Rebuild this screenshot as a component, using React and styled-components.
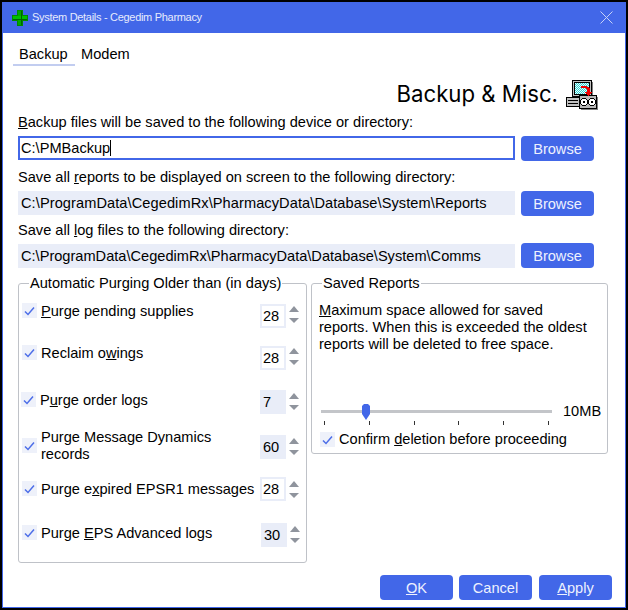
import React from "react";
import styled, { createGlobalStyle } from "styled-components";

const Global = createGlobalStyle`
  html, body { margin: 0; padding: 0; background: #fff; }
  body { font-family: "Liberation Sans", Arial, sans-serif; font-size: 14.6px; color: #000; }
  * { box-sizing: border-box; }
`;

const Frame = styled.div`
  width: 628px; height: 610px; border: 2px solid #000; background: #4267e8; padding: 0 1px 1px 1px;
  display: flex; flex-direction: column; overflow: hidden;
`;
const TitleBar = styled.div`
  height: 31px; flex: none; display: flex; align-items: center; padding: 0 12px 0 9px; background: #4267e8;
`;
const TitleText = styled.span`
  font-size: 11px; letter-spacing: -0.3px; font-family: "Liberation Sans", sans-serif; color: #e6ebfd; margin-left: 4px; flex: 1; padding-bottom: 1px;
`;
const Body = styled.div`
  flex: 1; background: #fff; padding: 12px 15px 0 15px; display: flex; flex-direction: column;
`;
const Tabs = styled.div`display: flex; height: 21px; margin-left: -5px;`;
const Tab = styled.div`
  padding: 0 6px; height: 21px; line-height: 19px; width: ${p => p.$w}px;
  border-bottom: 2px solid ${p => (p.$active ? "#c2cdf0" : "transparent")};
`;
const HeadRow = styled.div`
  display: flex; justify-content: flex-end; align-items: center; height: 38px; margin-top: 10px; padding-right: 12px; gap: 8px;
`;
const Heading = styled.div`
  font-family: "Inter", sans-serif; font-size: 22.2px; font-weight: 400; color: #000; padding-bottom: 4px;
`;
const FieldLabel = styled.div`
  line-height: 17px; height: 17px; margin-top: ${p => p.$top}px;
`;
const FieldRow = styled.div`
  display: flex; gap: 6px; align-items: flex-start; margin-top: ${p => p.$top}px; height: 25px;
`;
const PathInput = styled.div`
  width: 497px; height: 24px; line-height: ${p => (p.$focus ? 20 : 24)}px; white-space: nowrap;
  background: ${p => (p.$focus ? "#fff" : "#e9edf8")};
  border: ${p => (p.$focus ? "2px solid #4267e8" : "none")};
  padding-left: ${p => (p.$focus ? 1 : 3)}px; font-size: 14.6px; letter-spacing: ${p => p.$ls || 0}px;
`;
const Caret = styled.span`display: inline-block; width: 1px; height: 16px; background: #000; vertical-align: -3px;`;
const Btn = styled.div`
  width: ${p => p.$w || 73}px; height: 25px; background: #4267e8; border-radius: 4px; color: #eef1fe;
  display: flex; align-items: center; justify-content: center; font-size: 14.6px;
  margin-top: ${p => p.$top || 0}px; flex: none;
`;
const Groups = styled.div`display: flex; gap: 4px; align-items: flex-start; margin-top: 6px;`;
const Group = styled.fieldset`
  margin: 0; padding: 0; width: ${p => p.$w}px; height: ${p => p.$h}px; border: 1px solid #bfc2c8; border-radius: 3px; min-width: 0;
`;
const Legend = styled.legend`
  margin-left: 10px; padding: 0 1px; line-height: 17px; font-size: 14.6px;
`;
const PurgeList = styled.div`display: flex; flex-direction: column; padding: 12px 0 0 3px;`;
const PurgeRow = styled.div`
  display: grid; grid-template-columns: 15px 223px 26px 14px; align-items: start; height: ${p => p.$h}px;
`;
const CheckBox = styled.div`
  width: 15px; height: 15px; background: #eef1fa; display: flex; align-items: center; justify-content: center;
  margin-top: ${p => p.$top || 0}px; margin-left: ${p => p.$x || 0}px; flex: none;
`;
const RowLabel = styled.div`
  padding-left: 4px; line-height: 17px; margin-top: ${p => p.$top || 0}px; margin-left: ${p => p.$x || 0}px;
  white-space: ${p => (p.$wrap ? "normal" : "nowrap")};
`;
const SpinBox = styled.div`
  width: 26px; height: 24px; line-height: 20px; padding-left: 1px;
  margin-left: ${p => p.$x || 0}px;
  background: ${p => (p.$fill ? "#e9edf8" : "#fff")}; border: 2px solid #e9edf8;
`;
const Arrows = styled.div`
  display: flex; flex-direction: column; gap: 6px; padding: ${p => p.$top}px 0 0 3px;
  margin-left: ${p => p.$x || 0}px;
`;
const Tri = styled.div`
  width: 0; height: 0; border-left: 5px solid transparent; border-right: 5px solid transparent;
  ${p => (p.$down ? "border-top: 5px solid #8f949d;" : "border-bottom: 6px solid #8f949d;")}
`;
const Para = styled.div`
  padding: 10px 18px 0 7px; line-height: 17px; height: 109px;
`;
const SliderRow = styled.div`display: flex; align-items: center; padding-left: 9px; height: 20px;`;
const Track = styled.div`position: relative; width: 231px; height: 3px; background: #c3c5c9;`;
const Thumb = styled.svg`position: absolute; left: 41px; top: -6px;`;
const SliderValue = styled.div`margin-left: 11px;`;
const Ticks = styled.div`display: flex; justify-content: space-between; width: 225px; margin: 0 0 0 12px;`;
const TickMark = styled.div`width: 1px; height: 4px; background: #333;`;
const ConfirmRow = styled.div`display: flex; align-items: center; padding-left: 8px; margin-top: 6px;`;
const ConfirmLabel = styled.div`padding-left: 4px; line-height: 17px;`;
const Footer = styled.div`
  display: flex; justify-content: flex-end; margin: 12px -2px 0 0; gap: 6px;
`;
const CancelWrap = styled.div`margin-right: 1px;`;

const Tick = () => (
  <svg width="11" height="10" viewBox="0 0 11 10">
    <path d="M1 5.5 L4 8.5 L10 1.5" fill="none" stroke="#4d6ee8" strokeWidth="1.5" />
  </svg>
);

const Cross = () => (
  <svg width="16" height="16" viewBox="0 0 16 16" shapeRendering="crispEdges">
    <path d="M5 0h6v5h5v6h-5v5H5v-5H0V5h5z" fill="#008a00" />
    <rect x="6" y="1" width="3" height="14" fill="#00a800" />
    <rect x="1" y="6" width="14" height="3" fill="#00c000" />
    <rect x="9" y="1" width="1" height="14" fill="#006400" />
    <rect x="1" y="9" width="14" height="1" fill="#006400" />
  </svg>
);

const Close = () => (
  <svg width="13" height="13" viewBox="0 0 13 13">
    <path d="M0.5 0.5 L12.5 12.5 M12.5 0.5 L0.5 12.5" stroke="#c6d1f7" strokeWidth="1" fill="none" />
  </svg>
);

const BackupIcon = () => {
  const dots = [];
  for (let y = 3; y < 14; y++) for (let x = 9; x < 23; x++) if ((x + y) % 2 === 0) dots.push(<rect key={x + "-" + y} x={x} y={y} width="1" height="1" fill="#e8ffff" />);
  return (
    <svg width="32" height="30" viewBox="0 0 32 30" shapeRendering="crispEdges">
      <rect x="6" y="0" width="20" height="17" fill="#000" />
      <rect x="7" y="1" width="18" height="15" fill="#c0c0c0" />
      <rect x="8" y="2" width="16" height="13" fill="#000" />
      <rect x="9" y="3" width="14" height="11" fill="#30d0d0" />
      {dots}
      <rect x="26" y="2" width="1" height="15" fill="#808080" />
      <rect x="0" y="17" width="18" height="10" fill="#000" />
      <rect x="1" y="18" width="16" height="8" fill="#c0c0c0" />
      <rect x="2" y="20" width="10" height="1" fill="#000" />
      <rect x="2" y="23" width="10" height="1" fill="#000" />
      <rect x="13" y="15" width="18" height="14" fill="#000" />
      <rect x="14" y="16" width="16" height="12" fill="#b8b8b8" />
      <rect x="15" y="29" width="17" height="1" fill="#808080" />
      <rect x="31" y="17" width="1" height="13" fill="#808080" />
      <circle cx="18" cy="22" r="3.5" fill="#fff" stroke="#000" />
      <circle cx="26" cy="22" r="3.5" fill="#fff" stroke="#000" />
      <rect x="17" y="21" width="2" height="2" fill="#000" />
      <rect x="25" y="21" width="2" height="2" fill="#000" />
      <path d="M15 6h6v1h2v1h1v4h2v1h-1v1h-1v1h-1v1h-1v-1h-1v-1h-1v-1h-1v-1h2V9h-1V8h-5z" fill="#f00000" />
    </svg>
  );
};

const rows = [
  { h: 42, label: <><u>P</u>urge pending supplies</>, val: "28", ct: -1, lt: -1, at: 2 },
  { h: 44, label: <>Reclaim o<u>w</u>ings</>, val: "28", ct: -1, lt: -1, at: 2 },
  { h: 45, label: <>P<u>u</u>rge order logs</>, val: "7", fill: true, ct: 2, lt: 2, at: 3, cx: -1 },
  { h: 42, label: <>Purge Message Dynamics records</>, val: "60", fill: true, ct: 3, lt: -6, at: 3, wrap: true },
  { h: 46, label: <>Purge e<u>x</u>pired EPSR1 messages</>, val: "28", ct: 4, lt: 4, at: 4 },
  { h: 40, label: <>Purge <u>E</u>PS Advanced logs</>, val: "30", fill: true, ct: 2, lt: 2, at: 3, spinX: 1 },
];

export default function App() {
  return (
    <>
      <Global />
      <Frame>
        <TitleBar>
          <Cross />
          <TitleText>System Details - Cegedim Pharmacy</TitleText>
          <Close />
        </TitleBar>
        <Body>
          <Tabs>
            <Tab $active $w={62}>Backup</Tab>
            <Tab $w={62}>Modem</Tab>
          </Tabs>
          <HeadRow>
            <Heading>Backup &amp; Misc.</Heading>
            <BackupIcon />
          </HeadRow>
          <FieldLabel $top={0}><u>B</u>ackup files will be saved to the following device or directory:</FieldLabel>
          <FieldRow $top={5}>
            <PathInput $focus>C:\PMBackup<Caret /></PathInput>
            <Btn>Browse</Btn>
          </FieldRow>
          <FieldLabel $top={8}>Save all <u>r</u>eports to be displayed on screen to the following directory:</FieldLabel>
          <FieldRow $top={5}>
            <PathInput $ls={0.08}>C:\ProgramData\CegedimRx\PharmacyData\Database\System\Reports</PathInput>
            <Btn>Browse</Btn>
          </FieldRow>
          <FieldLabel $top={6}>Save all <u>l</u>og files to the following directory:</FieldLabel>
          <FieldRow $top={5}>
            <PathInput>C:\ProgramData\CegedimRx\PharmacyData\Database\System\Comms</PathInput>
            <Btn $top={-1}>Browse</Btn>
          </FieldRow>
          <Groups>
            <Group $w={289} $h={288}>
              <Legend>Automatic Purging Older than (in days)</Legend>
              <PurgeList>
                {rows.map((r, i) => (
                  <PurgeRow key={i} $h={r.h}>
                    <CheckBox $top={r.ct} $x={r.cx}><Tick /></CheckBox>
                    <RowLabel $top={r.lt} $x={r.cx} $wrap={r.wrap}>{r.label}</RowLabel>
                    <SpinBox $fill={r.fill} $x={r.spinX}>{r.val}</SpinBox>
                    <Arrows $top={r.at} $x={r.spinX}><Tri /><Tri $down /></Arrows>
                  </PurgeRow>
                ))}
              </PurgeList>
            </Group>
            <Group $w={297} $h={179}>
              <Legend>Saved Reports</Legend>
              <Para><u>M</u>aximum space allowed for saved reports. When this is exceeded the oldest reports will be deleted to free space.</Para>
              <SliderRow>
                <Track>
                  <Thumb width="8" height="16" viewBox="0 0 8 16"><path d="M2 0h4l2 2v8l-4 6L0 10V2z" fill="#4267e8" /></Thumb>
                </Track>
                <SliderValue>10MB</SliderValue>
              </SliderRow>
              <Ticks>{[0, 1, 2, 3, 4, 5].map(i => <TickMark key={i} />)}</Ticks>
              <ConfirmRow>
                <CheckBox><Tick /></CheckBox>
                <ConfirmLabel>Confirm <u>d</u>eletion before proceeding</ConfirmLabel>
              </ConfirmRow>
            </Group>
          </Groups>
          <Footer>
            <Btn><span><u>O</u>K</span></Btn>
            <CancelWrap><Btn>Cancel</Btn></CancelWrap>
            <Btn><span><u>A</u>pply</span></Btn>
          </Footer>
        </Body>
      </Frame>
    </>
  );
}
